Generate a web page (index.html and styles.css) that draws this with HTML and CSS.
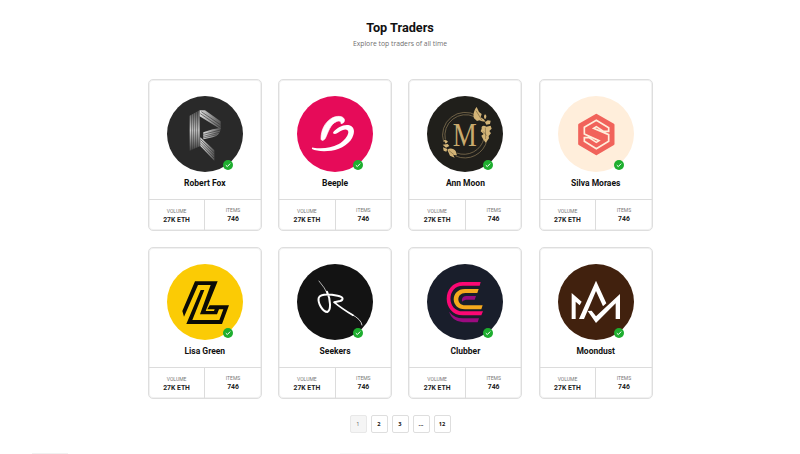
FILE: index.html
```
<!DOCTYPE html>
<html lang="en">
<head>
<meta charset="utf-8">
<title>Top Traders</title>
<link rel="stylesheet" href="styles.css">
</head>
<body>
<main>
  <header>
    <h1>Top Traders</h1>
    <p>Explore top traders of all time</p>
  </header>
  <section class="grid" id="traders">
    <article class="card">
      <div class="avatar">
        <svg viewBox="81 78 228 228">
          <defs>
            <linearGradient id="stem" x1="0" y1="0" x2="0" y2="1"><stop offset="0" stop-color="#555"/><stop offset=".5" stop-color="#ccc"/><stop offset="1" stop-color="#444"/></linearGradient>
            <linearGradient id="arm"><stop offset="0" stop-color="#ddd"/><stop offset="1" stop-color="#555"/></linearGradient>
          </defs>
          <circle cx="195" cy="192" r="114" fill="#292929"/>
          <path d="M149 137L179 121V229L149 242Z" fill="url(#stem)"/>
          <path d="M155 133V240M161 130V238M167 127V235M173 124V232" stroke="#292929" stroke-width="1.7"/>
          <path d="M179 121L195 121L242 154V178L179 139Z" fill="url(#arm)"/>
          <path d="M242 174Q242 196 218 202L190 208V187L218 178Q239 174 242 174Z" fill="url(#arm)"/>
          <path d="M181 202L223 241V272L181 228Z" fill="url(#arm)"/>
          <path d="M184 125L241 164M181 131L241 172M190 193L241 180M190 199L238 187M190 204L230 194M182 209L222 248M182 216L222 256M182 223L222 264" fill="none" stroke="#292929" stroke-width="1.7"/>
        </svg>
        <span class="check"><svg viewBox="0 0 10 10"><path d="M2.8 5.2L4.3 6.6L7.2 3.6"/></svg></span>
      </div>
      <h2>Robert Fox</h2>
      <dl><div><dt>VOLUME</dt><dd>27K ETH</dd></div><div><dt>ITEMS</dt><dd>746</dd></div></dl>
    </article>
    <article class="card">
      <div class="avatar">
        <svg viewBox="81 78 228 228">
          <circle cx="195" cy="192" r="114" fill="#e60b59"/>
          <path d="M153 206C153 181 164 158 183 146C199 136 219 137 223 148C225 156 219 161 213 161C214 154 208 151 199 155C181 162 174 188 166 205C161 213 153 213 153 206Z" fill="#fff" stroke="#fff" stroke-width="2"/>
          <path d="M190 186C202 172 219 163 235 165C250 167 255 181 250 195C243 219 215 238 184 242C160 245 137 243 126 237C125 234 127 232 130 233C156 237 183 234 205 223C221 215 234 199 235 187C235 178 226 177 217 181C208 185 201 191 195 192C190 192 188 189 190 186Z" fill="#fff"/>
        </svg>
        <span class="check"><svg viewBox="0 0 10 10"><path d="M2.8 5.2L4.3 6.6L7.2 3.6"/></svg></span>
      </div>
      <h2>Beeple</h2>
      <dl><div><dt>VOLUME</dt><dd>27K ETH</dd></div><div><dt>ITEMS</dt><dd>746</dd></div></dl>
    </article>
    <article class="card">
      <div class="avatar">
        <svg viewBox="82 78 228 228">
          <circle cx="196" cy="192" r="114" fill="#201f1b"/>
          <g fill="none" stroke="#94805a" stroke-width="2"><path d="M232 137A68 68 0 0 0 132 216M168 258A68 68 0 0 0 262 210"/><path d="M224 140A62 62 0 0 0 137 209M171 249A62 62 0 0 0 253 205"/></g>
          <text x="195" y="228" text-anchor="middle" textLength="72" lengthAdjust="spacingAndGlyphs" class="monogram">M</text>
          <g fill="#d3b477">
            <path d="M223 145C219 133 224 119 231 111L238 126L246 132L243 142L252 148L258 155L247 154L239 151L232 153Z"/>
            <path d="M256 133C262 136 261 144 256 148C252 143 252 137 256 133ZM264 151L273 152L271 162L260 164L256 157Z"/>
            <path d="M246 176C244 168 252 164 260 170L273 167L276 176L269 183L274 190L267 198L268 205L258 218L250 207L245 197L252 192L243 184Z"/>
            <path d="M132 211Q140 208 145 215L138 221ZM129 224L144 222L149 228L139 233ZM130 232L143 237L140 245L132 242Z"/>
            <path d="M143 239C151 233 163 236 168 243L172 256L161 255L165 263L151 257Z"/>
          </g>
          <path d="M229 122L247 151M257 173L258 207M148 242L163 254M250 184L261 197" fill="none" stroke="#655333" stroke-width="1.6"/>
        </svg>
        <span class="check"><svg viewBox="0 0 10 10"><path d="M2.8 5.2L4.3 6.6L7.2 3.6"/></svg></span>
      </div>
      <h2>Ann Moon</h2>
      <dl><div><dt>VOLUME</dt><dd>27K ETH</dd></div><div><dt>ITEMS</dt><dd>746</dd></div></dl>
    </article>
    <article class="card">
      <div class="avatar">
        <svg viewBox="83 78 228 228">
          <circle cx="197" cy="192" r="114" fill="#ffeedb"/>
          <path d="M198 135L249 164V222L198 252L147 222V164Z" fill="#f1635b" stroke="#f1635b" stroke-width="7" stroke-linejoin="round"/>
          <path d="M235 184V173L198 151L162 172V192L206 212L198 217L176 203H162V214L198 236L235 214V194L190 175L198 170L220 184Z" fill="none" stroke="#ffeedb" stroke-width="5"/>
        </svg>
        <span class="check"><svg viewBox="0 0 10 10"><path d="M2.8 5.2L4.3 6.6L7.2 3.6"/></svg></span>
      </div>
      <h2>Silva Moraes</h2>
      <dl><div><dt>VOLUME</dt><dd>27K ETH</dd></div><div><dt>ITEMS</dt><dd>746</dd></div></dl>
    </article>
    <article class="card">
      <div class="avatar">
        <svg viewBox="81 72 228 228">
          <circle cx="195" cy="186" r="114" fill="#fbcb05"/>
          <path d="M132 230L127 213L165 124H233L197 213H222L224 208H202L209 196H267L246 252H139L182 150H193L157 240H238L250 208H237L231 223H180L212 135H174Z" fill="#0b0b06"/>
        </svg>
        <span class="check"><svg viewBox="0 0 10 10"><path d="M2.8 5.2L4.3 6.6L7.2 3.6"/></svg></span>
      </div>
      <h2>Lisa Green</h2>
      <dl><div><dt>VOLUME</dt><dd>27K ETH</dd></div><div><dt>ITEMS</dt><dd>746</dd></div></dl>
    </article>
    <article class="card">
      <div class="avatar">
        <svg viewBox="81 72 228 228">
          <circle cx="195" cy="186" r="114" fill="#131313"/>
          <g fill="none" stroke="#fff" stroke-linecap="round" stroke-linejoin="round">
            <path d="M147 123Q165 143 174 165" stroke-width="2"/>
            <path d="M171 155C183 181 183 212 172 216C158 215 143 190 146 174C151 161 181 163 203 167C219 170 223 179 210 183L193 187" stroke-width="6"/>
            <path d="M193 187C211 202 231 215 249 226" stroke-width="5"/>
            <path d="M245 223Q274 238 276 255" stroke-width="2.4"/>
          </g>
        </svg>
        <span class="check"><svg viewBox="0 0 10 10"><path d="M2.8 5.2L4.3 6.6L7.2 3.6"/></svg></span>
      </div>
      <h2>Seekers</h2>
      <dl><div><dt>VOLUME</dt><dd>27K ETH</dd></div><div><dt>ITEMS</dt><dd>746</dd></div></dl>
    </article>
    <article class="card">
      <div class="avatar">
        <svg viewBox="82 72 228 228">
          <circle cx="196" cy="186" r="114" fill="#191e2b"/>
          <path d="M243 126L240 137H190C140 137 140 214 190 214H250L245 226H190C125 226 125 126 190 126Z" fill="#fb0874"/>
          <path d="M237 147L233 159H197C169 159 169 196 197 196H249L245 208H196C151 208 151 147 196 147Z" fill="#f6a91d"/>
          <path d="M229 168L225 179H199Q191 180 187 185Q184 170 199 168ZM148 215Q165 235 190 235H238L234 247H190Q157 244 148 215Z" fill="#9b0b80"/>
        </svg>
        <span class="check"><svg viewBox="0 0 10 10"><path d="M2.8 5.2L4.3 6.6L7.2 3.6"/></svg></span>
      </div>
      <h2>Clubber</h2>
      <dl><div><dt>VOLUME</dt><dd>27K ETH</dd></div><div><dt>ITEMS</dt><dd>746</dd></div></dl>
    </article>
    <article class="card">
      <div class="avatar">
        <svg viewBox="83 72 228 228">
          <circle cx="197" cy="186" r="114" fill="#41210e"/>
          <path d="M124 159L154 185L148 196L136 185V237H124ZM146 237L197 122L228 190L218 199L197 153L161 237ZM172 213L184 212L197 229L269 162V237H256V190L197 249Z" fill="#fff"/>
        </svg>
        <span class="check"><svg viewBox="0 0 10 10"><path d="M2.8 5.2L4.3 6.6L7.2 3.6"/></svg></span>
      </div>
      <h2>Moondust</h2>
      <dl><div><dt>VOLUME</dt><dd>27K ETH</dd></div><div><dt>ITEMS</dt><dd>746</dd></div></dl>
    </article>
  </section>
  <nav>
    <a class="current">1</a><a>2</a><a>3</a><a>...</a><a>12</a>
  </nav>
  <footer><i></i><i class="wide"></i></footer>
</main>
</body>
</html>
```
FILE: styles.css
```
* { box-sizing: border-box; }
body { margin: 0; background: #fff; color: #111; font-family: Roboto, sans-serif; }
main { width: 800px; height: 454px; overflow: hidden; display: flex; flex-direction: column; }
header { padding-top: 19px; height: 79px; text-align: center; }
h1 { margin: 0; font-size: 12.7px; line-height: 17px; font-weight: 700; }
header p { margin: 2px 0 0; font: 6.8px/11px "Open Sans", sans-serif; color: #707070; }
.grid { display: grid; grid-template-columns: repeat(4, 114px); gap: 16px 16.3px; margin-left: 147.8px; }
.card { height: 152px; border: 1px solid #dedede; box-shadow: inset 0 0 0 1px #f1f1f1; border-radius: 5px; display: flex; flex-direction: column; align-items: center; padding-top: 16px; }
.avatar { position: relative; width: 76px; height: 76px; }
.avatar > svg { display: block; width: 76px; height: 76px; }
.monogram { font-family: "Liberation Serif", serif; font-size: 98px; fill: #c8aa6d; }
.check { position: absolute; left: 56px; top: 63.5px; width: 10px; height: 10px; border-radius: 50%; background: #1eae2f; }
.check svg { display: block; width: 10px; height: 10px; }
.check path { fill: none; stroke: #fff; stroke-width: 1; }
h2 { margin: 5px 0 0; font-size: 8.5px; line-height: 12px; font-weight: 700; }
dl { display: flex; width: 100%; margin: auto 0 0; height: 31px; border-top: 1px solid #dcdcdc; text-align: center; }
dl div { flex: 1; padding-top: 8px; }
dl div + div { border-left: 1px solid #dcdcdc; padding-top: 7px; }
dt { font-size: 5px; line-height: 7px; color: #777; }
dd { margin: 0; font-size: 6.8px; line-height: 10px; font-weight: 700; color: #222; }
nav { display: flex; gap: 4px; margin: 16px 0 0 349.5px; }
nav a { width: 17px; height: 18px; border: 1px solid #dedede; border-radius: 2px; font: 700 5.7px/16px "Open Sans", sans-serif; text-align: center; }
nav .current { background: #f5f5f5; border-color: #e8e8e8; color: #666; font-weight: 400; }
footer { display: flex; margin: auto 0 0 32px; gap: 272px; }
footer i { width: 36px; height: 1px; background: #f1f1f1; }
footer .wide { width: 60px; background: #f8f8f8; }
```
